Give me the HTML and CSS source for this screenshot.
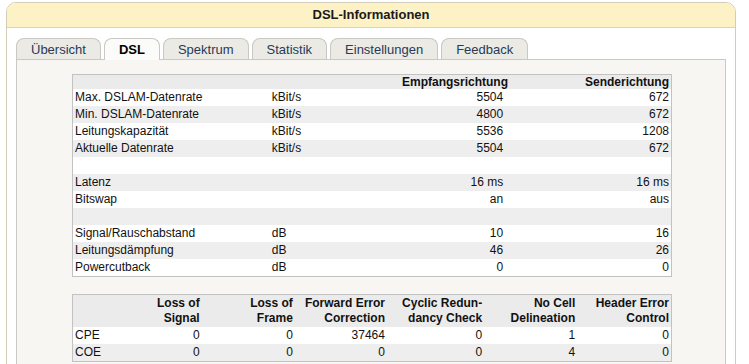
FILE: index.html
```html
<!DOCTYPE html>
<html lang="de">
<head>
<meta charset="utf-8">
<title>DSL-Informationen</title>
<link rel="stylesheet" href="styles.css">
</head>
<body>
<div class="box">
  <div class="box-head">DSL-Informationen</div>
  <div class="box-body">
    <div class="tabs">
      <div class="tab">Übersicht</div>
      <div class="tab active">DSL</div>
      <div class="tab">Spektrum</div>
      <div class="tab">Statistik</div>
      <div class="tab">Einstellungen</div>
      <div class="tab">Feedback</div>
    </div>
    <div class="panel">
      <table class="grid grid-main">
        <colgroup>
          <col class="c-label"><col class="c-unit"><col class="c-down"><col class="c-up">
        </colgroup>
        <thead>
          <tr><th></th><th></th><th class="num">Empfangsrichtung</th><th class="num">Senderichtung</th></tr>
        </thead>
        <tbody>
          <tr><td>Max. DSLAM-Datenrate</td><td>kBit/s</td><td class="num">5504</td><td class="num">672</td></tr>
          <tr><td>Min. DSLAM-Datenrate</td><td>kBit/s</td><td class="num">4800</td><td class="num">672</td></tr>
          <tr><td>Leitungskapazität</td><td>kBit/s</td><td class="num">5536</td><td class="num">1208</td></tr>
          <tr><td>Aktuelle Datenrate</td><td>kBit/s</td><td class="num">5504</td><td class="num">672</td></tr>
          <tr><td></td><td></td><td></td><td></td></tr>
          <tr><td>Latenz</td><td></td><td class="num">16 ms</td><td class="num">16 ms</td></tr>
          <tr><td>Bitswap</td><td></td><td class="num">an</td><td class="num">aus</td></tr>
          <tr><td></td><td></td><td></td><td></td></tr>
          <tr><td>Signal/Rauschabstand</td><td>dB</td><td class="num">10</td><td class="num">16</td></tr>
          <tr><td>Leitungsdämpfung</td><td>dB</td><td class="num">46</td><td class="num">26</td></tr>
          <tr><td>Powercutback</td><td>dB</td><td class="num">0</td><td class="num">0</td></tr>
        </tbody>
      </table>

      <table class="grid grid-err">
        <colgroup>
          <col class="e-label"><col class="e1"><col class="e2"><col class="e3"><col class="e4"><col class="e5"><col class="e6">
        </colgroup>
        <thead>
          <tr>
            <th></th>
            <th class="num">Loss of<br>Signal</th>
            <th class="num">Loss of<br>Frame</th>
            <th class="num">Forward Error<br>Correction</th>
            <th class="num">Cyclic Redun-<br>dancy Check</th>
            <th class="num">No Cell<br>Delineation</th>
            <th class="num">Header Error<br>Control</th>
          </tr>
        </thead>
        <tbody>
          <tr><td>CPE</td><td class="num">0</td><td class="num">0</td><td class="num">37464</td><td class="num">0</td><td class="num">1</td><td class="num">0</td></tr>
          <tr><td>COE</td><td class="num">0</td><td class="num">0</td><td class="num">0</td><td class="num">0</td><td class="num">4</td><td class="num">0</td></tr>
        </tbody>
      </table>
    </div>
  </div>
</div>
</body>
</html>
```

FILE: styles.css
```css
html, body {
  margin: 0;
  padding: 0;
  background: #ffffff;
}

body {
  font-family: "Liberation Sans", Arial, sans-serif;
  font-size: 12px;
  color: #111111;
}

.box {
  margin: 2px 0 0 6px;
  width: 728px;
  border: 1px solid #d2cdb8;
  border-radius: 10px 10px 0 0;
  overflow: hidden;
  background: #ffffff;
}

.box-head {
  height: 24px;
  line-height: 24px;
  background: #fcf2c6;
  border-bottom: 1px solid #ddd5ae;
  text-align: center;
  font-weight: bold;
  font-size: 13px;
  color: #1a1a1a;
}

.box-body {
  padding: 10px 9px 20px 9px;
}

.tabs {
  display: flex;
  align-items: flex-end;
  gap: 3px;
}

.tab {
  height: 20px;
  line-height: 21px;
  padding: 0 14px;
  font-size: 13px;
  color: #283a58;
  background: #ebeae5;
  border: 1px solid #c8c8c4;
  border-bottom: none;
  border-radius: 8px 8px 0 0;
}

.tab.active {
  font-weight: bold;
  color: #000000;
  background: #fbfbf9;
  height: 21px;
  margin-bottom: -1px;
}

.panel {
  background: #f7f6f2;
  border: 1px solid #c8c8c4;
  padding: 14px 54px 30px 55px;
}

.grid {
  width: 600px;
  border-collapse: collapse;
  table-layout: fixed;
  border: 1px solid #c2c2c2;
  background: #ffffff;
}

.grid th,
.grid td {
  padding: 0 2px;
  height: 17px;
  line-height: 15px;
  white-space: nowrap;
  text-align: left;
  font-size: 12px;
}

.grid th {
  font-weight: bold;
  color: #111111;
  background: #ebebeb;
}

.grid-main thead th {
  height: 14px;
  line-height: 14px;
  padding-top: 0;
}

.grid .num {
  text-align: right;
}

.grid tbody tr:nth-child(even) td {
  background: #eeeeee;
}

.grid-main .c-label { width: 197px; }
.grid-main .c-unit { width: 130px; }
.grid-main .c-down { width: 105px; }
.grid-main .c-up { width: 166px; }

.grid-err {
  margin-top: 17px;
}

.grid-err thead th {
  height: 32px;
  line-height: 15px;
  vertical-align: middle;
}

.grid-err .e-label { width: 37px; }
.grid-err .e1 { width: 92px; }
.grid-err .e2 { width: 93px; }
.grid-err .e3 { width: 92px; }
.grid-err .e4 { width: 97px; }
.grid-err .e5 { width: 93px; }
.grid-err .e6 { width: 94px; }
```
